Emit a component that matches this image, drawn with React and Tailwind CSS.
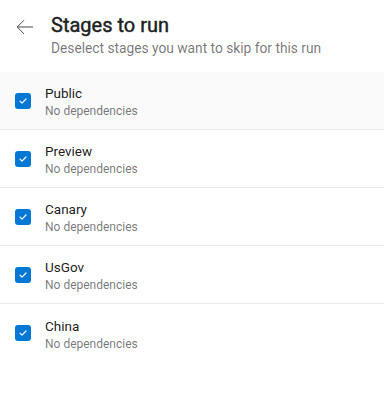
import { useState } from 'react';

const stages = ['Public', 'Preview', 'Canary', 'UsGov', 'China'];

const Check = ({ checked }) => (
  <span
    className={`flex h-4 w-4 items-center justify-center rounded-[3px] ${
      checked ? 'bg-[#0078d4]' : 'border border-[#8a8886] bg-white'
    }`}
  >
    {checked && (
      <svg width="10" height="10" viewBox="0 0 10 10" fill="none">
        <path d="M2 5.2l2 2L8 3" stroke="white" strokeWidth="1.2" strokeLinecap="round" strokeLinejoin="round" />
      </svg>
    )}
  </span>
);

const App = () => {
  const [selected, setSelected] = useState(stages);

  const toggle = (name) => {
    setSelected((prev) =>
      prev.includes(name) ? prev.filter((s) => s !== name) : [...prev, name]
    );
  };

  return (
    <div className="h-[401px] w-[384px] bg-white font-['Roboto',sans-serif] text-[rgba(0,0,0,0.9)]">
      {/* Header */}
      <div className="flex items-start pl-[16px] pt-[12px] h-[72px]">
        <svg className="mt-[7px]" width="18" height="16" viewBox="0 0 18 16" fill="none">
          <path d="M17 8H1.5M8 1.2L1.2 8L8 14.8" stroke="#4a4a4a" strokeWidth="1" />
        </svg>
        <div className="ml-[17px]">
          <div className="text-[20px] font-normal leading-[26px] text-[#201f1e] [-webkit-text-stroke:0.45px_#201f1e]">
            Stages to run
          </div>
          <p className="text-[13.75px] leading-[20px] text-[rgba(0,0,0,0.55)]">
            Deselect stages you want to skip for this run
          </p>
        </div>
      </div>

      {/* Stage list */}
      <div>
        {stages.map((name, i) => (
          <button
            key={name}
            onClick={() => toggle(name)}
            className={`flex h-[58px] w-full items-center pl-[15px] text-left ${
              i < stages.length - 1 ? 'border-b border-[#eaeaea]' : ''
            } ${i === 0 ? 'bg-[#fafafa]' : ''}`}
          >
            <Check checked={selected.includes(name)} />
            <div className="ml-[14px] mt-[2px]">
              <div className="text-[13.5px] leading-[19px]">{name}</div>
              <div className="text-[12px] leading-[16px] text-[rgba(0,0,0,0.55)]">No dependencies</div>
            </div>
          </button>
        ))}
      </div>
    </div>
  );
};

export default App;
